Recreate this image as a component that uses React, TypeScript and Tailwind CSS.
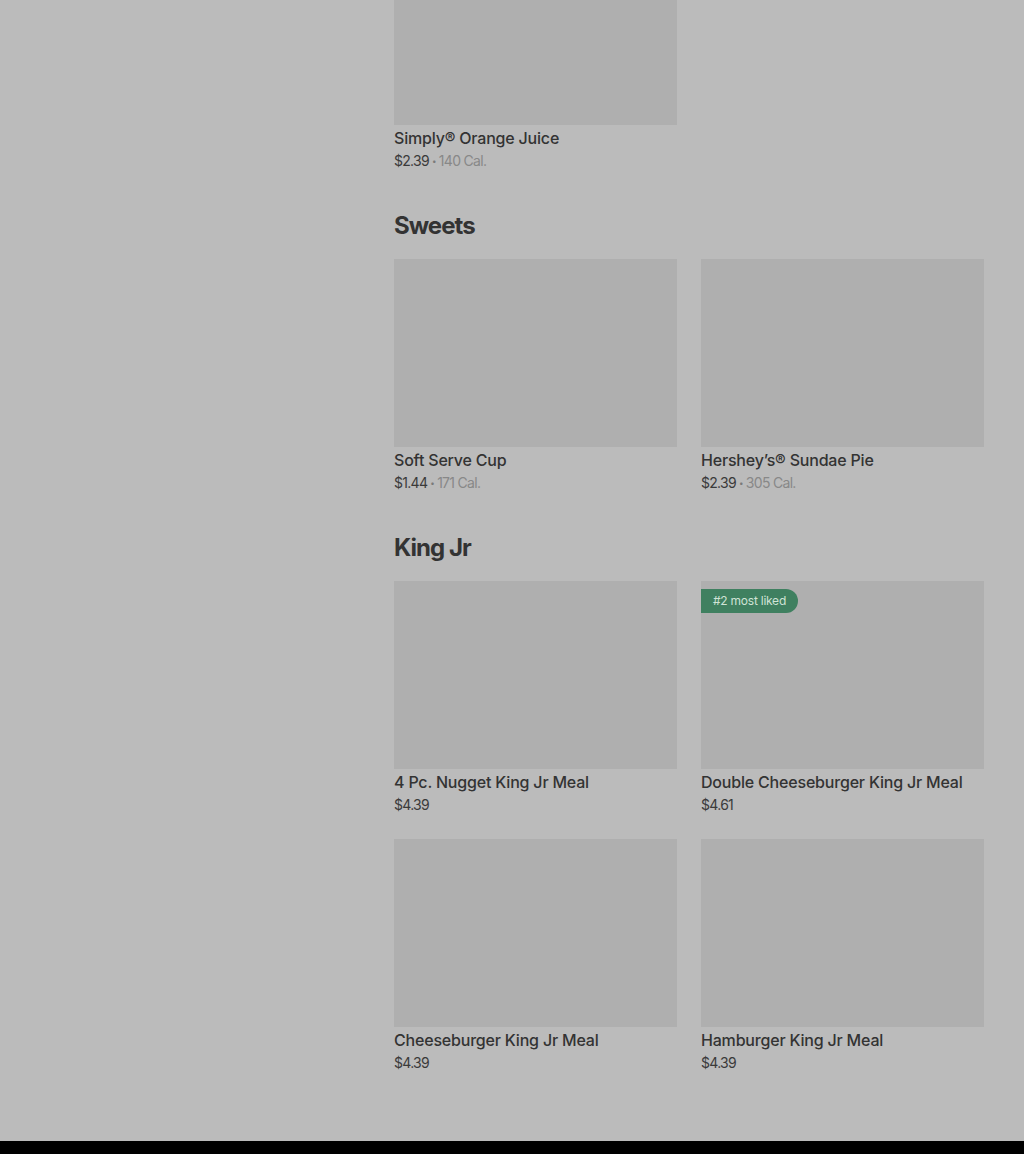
type Item = {
  name: string;
  price: string;
  cal?: string;
  badge?: string;
};

const sections: { title?: string; items: Item[] }[] = [
  { items: [{ name: 'Simply® Orange Juice', price: '$2.39', cal: '140 Cal.' }] },
  {
    title: 'Sweets',
    items: [
      { name: 'Soft Serve Cup', price: '$1.44', cal: '171 Cal.' },
      { name: 'Hershey’s® Sundae Pie', price: '$2.39', cal: '305 Cal.' },
    ],
  },
  {
    title: 'King Jr',
    items: [
      { name: '4 Pc. Nugget King Jr Meal', price: '$4.39' },
      { name: 'Double Cheeseburger King Jr Meal', price: '$4.61', badge: '#2 most liked' },
      { name: 'Cheeseburger King Jr Meal', price: '$4.39' },
      { name: 'Hamburger King Jr Meal', price: '$4.39' },
    ],
  },
];

function ItemCard({ item }: { item: Item }) {
  return (
    <div className="flex flex-col">
      <div className="relative h-[188px] bg-[#afafaf]">
        {item.badge && (
          <span className="absolute left-0 top-2 flex h-6 items-center rounded-r-full bg-[#3f8060] px-3 text-[12px] tracking-[-0.02em] text-[#cfe3d6]">
            {item.badge}
          </span>
        )}
      </div>
      <div className="mt-[3px] text-[16px] font-medium leading-5 tracking-[-0.012em] text-[#333333]">
        {item.name}
      </div>
      <div className="mt-[3px] flex items-center text-[14px] leading-5 tracking-[-0.05em]">
        <span className="text-[#3a3a3a]">{item.price}</span>
        {item.cal && (
          <>
            <span className="mx-[3px] text-[8px] text-[#7a7a7a]">•</span>
            <span className="text-[#888888]">{item.cal}</span>
          </>
        )}
      </div>
    </div>
  );
}

export default function App() {
  return (
    <div className="flex min-h-[1154px] flex-col bg-[#bbbbbb] font-['Inter',sans-serif]">
      <div className="flex-1 pl-[394px] pr-10 -mt-[63px]">
        {sections.map((section, i) => (
          <section key={i} className={i > 0 ? 'mt-[39px]' : ''}>
            {section.title && (
              <h2 className="mb-[17px] text-[24px] font-bold leading-8 tracking-[-0.04em] text-[#333333]">
                {section.title}
              </h2>
            )}
            <div className="grid w-[590px] grid-cols-2 gap-6">
              {section.items.map(item => (
                <ItemCard key={item.name} item={item} />
              ))}
            </div>
          </section>
        ))}
      </div>
      <div className="mt-[68px] h-[13px] bg-black" />
    </div>
  );
}
